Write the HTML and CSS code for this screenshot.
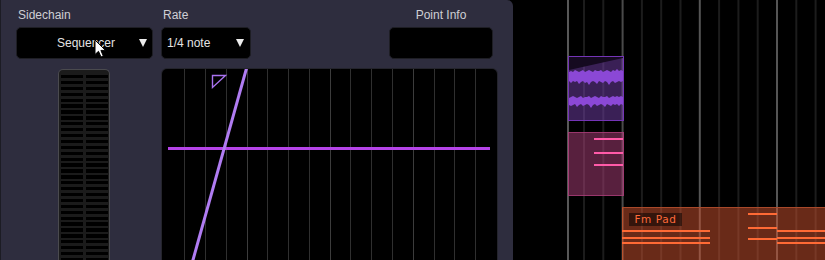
FILE: index.html
```html
<!DOCTYPE html>
<html>
<head>
<meta charset="utf-8">
<link rel="stylesheet" href="styles.css">
</head>
<body>
<div class="app">
  <div class="panel">
    <div class="top">
      <div class="field sidechain">
        <div class="label">Sidechain</div>
        <div class="select sel-side"><span>Sequencer</span><i class="arrow"></i></div>
      </div>
      <div class="field rate">
        <div class="label">Rate</div>
        <div class="select sel-rate"><span>1/4 note</span><i class="arrow"></i></div>
      </div>
      <div class="field info">
        <div class="label center">Point Info</div>
        <div class="box"></div>
      </div>
    </div>
    <div class="bottom">
      <div class="meter"><div class="col"></div><div class="col"></div></div>
      <div class="graph">
        <svg width="335" height="200" viewBox="0 0 335 200">
          <g stroke="#2f2f2f" stroke-width="1">
            <line x1="22.5" y1="0" x2="22.5" y2="200"/>
            <line x1="43.5" y1="0" x2="43.5" y2="200"/>
            <line x1="64.5" y1="0" x2="64.5" y2="200"/>
            <line x1="85.5" y1="0" x2="85.5" y2="200" stroke="#3c3c3c"/>
            <line x1="105.5" y1="0" x2="105.5" y2="200"/>
            <line x1="126.5" y1="0" x2="126.5" y2="200"/>
            <line x1="147.5" y1="0" x2="147.5" y2="200"/>
            <line x1="168.5" y1="0" x2="168.5" y2="200" stroke="#3c3c3c"/>
            <line x1="188.5" y1="0" x2="188.5" y2="200"/>
            <line x1="209.5" y1="0" x2="209.5" y2="200"/>
            <line x1="230.5" y1="0" x2="230.5" y2="200"/>
            <line x1="251.5" y1="0" x2="251.5" y2="200" stroke="#3c3c3c"/>
            <line x1="272.5" y1="0" x2="272.5" y2="200"/>
            <line x1="292.5" y1="0" x2="292.5" y2="200"/>
            <line x1="313.5" y1="0" x2="313.5" y2="200"/>
          </g>
          <line x1="6" y1="79.5" x2="328" y2="79.5" stroke="#b544e8" stroke-width="3"/>
          <line x1="86" y1="-6" x2="29" y2="198" stroke="#b07cf2" stroke-width="3"/>
          <polygon points="50.5,6.5 63.5,6.5 50.5,18.5" fill="none" stroke="#a872ee" stroke-width="1.4"/>
        </svg>
      </div>
    </div>
    <svg class="cursor" width="14" height="20" viewBox="0 0 14 20">
      <path d="M1 1 L1 15.5 L4.5 12.3 L7 18 L9.3 17 L6.9 11.4 L11.5 11.4 Z" fill="#fff" stroke="#000" stroke-width="1" stroke-linejoin="round"/>
    </svg>
  </div>
  <div class="timeline">
    <svg class="grid" width="312" height="260" viewBox="0 0 312 260">
      <g stroke="#1c1c1c" stroke-width="2">
        <line x1="71" y1="0" x2="71" y2="260"/>
        <line x1="90.3" y1="0" x2="90.3" y2="260"/>
        <line x1="109.6" y1="0" x2="109.6" y2="260" stroke="#4a4a4a"/>
        <line x1="128.9" y1="0" x2="128.9" y2="260"/>
        <line x1="148.2" y1="0" x2="148.2" y2="260"/>
        <line x1="167.5" y1="0" x2="167.5" y2="260"/>
        <line x1="186.8" y1="0" x2="186.8" y2="260" stroke="#555"/>
        <line x1="206.1" y1="0" x2="206.1" y2="260"/>
        <line x1="225.4" y1="0" x2="225.4" y2="260"/>
        <line x1="244.7" y1="0" x2="244.7" y2="260"/>
        <line x1="264" y1="0" x2="264" y2="260" stroke="#555"/>
        <line x1="283.3" y1="0" x2="283.3" y2="260"/>
        <line x1="302.6" y1="0" x2="302.6" y2="260"/>
      </g>
      <line x1="55" y1="0" x2="55" y2="260" stroke="#6e6e6e" stroke-width="1.6"/>
    </svg>
    <div class="clip audio">
      <svg class="wave" width="54" height="63" viewBox="0 0 54 63">
        <polygon points="0,0 54,0 54,1 0,13" fill="#150a20"/>
        <polygon fill="#8b48d6" points="0,15 2,14 4,15 6,13 8,14 10,15 12,14 14,13 16,15 18,14 20,13 22,14 24,15 26,13 28,14 30,14 32,13 34,15 36,14 38,13 40,14 42,15 44,13 46,14 48,12 50,14 52,13 54,14 54,24 52,25 50,24 48,25 46,26 44,24 42,25 40,28 38,25 36,24 34,26 32,25 30,24 28,27 26,25 24,24 22,25 20,28 18,25 16,26 14,24 12,25 10,27 8,24 6,25 4,24 2,26 0,24"/>
        <polygon fill="#8b48d6" points="0,41 2,40 4,39 6,40 8,41 10,40 12,39 14,41 16,40 18,40 20,39 22,41 24,40 26,39 28,40 30,41 32,39 34,40 36,40 38,39 40,41 42,40 44,39 46,40 48,39 50,40 52,39 54,40 54,48 52,47 50,49 48,47 46,48 44,47 42,49 40,48 38,47 36,50 34,48 32,47 30,48 28,49 26,47 24,48 22,51 20,48 18,47 16,48 14,49 12,47 10,48 8,50 6,47 4,48 2,49 0,48"/>
      </svg>
    </div>
    <div class="clip midi">
      <i class="note pn" style="top:5px"></i>
      <i class="note pn" style="top:19px"></i>
      <i class="note pn" style="top:31px"></i>
    </div>
    <div class="clip pad">
      <div class="clip-name">Fm Pad</div>
      <i class="note on g1" style="top:22px"></i>
      <i class="note on g1" style="top:29px"></i>
      <i class="note on g1" style="top:34px"></i>
      <i class="note on g2" style="top:5px"></i>
      <i class="note on g2" style="top:19px"></i>
      <i class="note on g2" style="top:30px"></i>
      <i class="note on g3" style="top:22px"></i>
      <i class="note on g3" style="top:29px"></i>
      <i class="note on g3" style="top:34px"></i>
    </div>
  </div>
</div>
</body>
</html>
```

FILE: styles.css
```css
* { box-sizing: border-box; }
html, body {
  margin: 0;
  padding: 0;
  background: #000;
  width: 825px;
  height: 260px;
  overflow: hidden;
  font-family: "Liberation Sans", Arial, sans-serif;
}
.app {
  display: flex;
  width: 825px;
  height: 260px;
}
.panel {
  position: relative;
  width: 513px;
  height: 260px;
  flex: none;
  background: #2e2d3e;
  border-top-right-radius: 6px;
  box-shadow: inset 1px 0 0 #1c1c24;
  padding: 8px 16px 0 16px;
  overflow: hidden;
}
.top {
  display: flex;
}
.field { display: flex; flex-direction: column; }
.sidechain { width: 137px; margin-right: 8px; }
.rate { width: 90px; }
.info { width: 104px; margin-left: auto; margin-right: 4px; }
.label {
  font-size: 12px;
  line-height: 14px;
  height: 14px;
  margin-bottom: 5px;
  color: #cfcfd4;
  padding-left: 2px;
}
.label.center { text-align: center; padding-left: 0; }
.select, .box {
  height: 32px;
  background: #000;
  border: 1px solid #1e1e24;
  border-radius: 5px;
}
.select {
  display: flex;
  align-items: center;
  font-size: 12px;
  color: #e4e4e4;
}
.sel-side { padding: 0 5px 0 40px; }
.sel-rate { padding: 0 6px 0 5px; }
.arrow {
  margin-left: auto;
  width: 0;
  height: 0;
  border-left: 4.5px solid transparent;
  border-right: 4.5px solid transparent;
  border-top: 8px solid #ececec;
}
.bottom {
  display: flex;
  margin-top: 10px;
}
.meter {
  margin-left: 42px;
  width: 52px;
  height: 200px;
  border: 1px solid #4a4a4e;
  border-bottom: none;
  border-radius: 5px 5px 0 0;
  background: #1b1b1b;
  padding: 5px 1px 0 2px;
  display: flex;
  gap: 3px;
}
.col {
  width: 22px;
  height: 100%;
  background: repeating-linear-gradient(to bottom, #000 0, #000 3.3px, transparent 3.3px, transparent 5.9px);
}
.graph {
  margin-left: 52px;
  width: 335px;
  height: 200px;
  background: #000;
  border-radius: 5px;
  box-shadow: 0 0 0 1px #24242c;
  overflow: hidden;
}
.graph svg { display: block; }
.cursor {
  position: absolute;
  left: 94px;
  top: 39px;
}
.timeline {
  position: relative;
  flex: 1;
  height: 260px;
  background: #000;
  overflow: hidden;
}
.grid { position: absolute; left: 0; top: 0; }
.clip {
  position: absolute;
}
.audio {
  left: 55px;
  top: 56px;
  width: 56px;
  height: 65px;
  background: rgba(116, 64, 172, 0.5);
  border: 1px solid #7434b6;
}
.wave { position: absolute; left: 0; top: 0; }
.midi {
  left: 55px;
  top: 132px;
  width: 56px;
  height: 64px;
  background: rgba(184, 66, 130, 0.48);
  border: 1px solid rgba(170, 60, 120, 0.8);
}
.pad {
  left: 109px;
  top: 207px;
  width: 210px;
  height: 60px;
  background: rgba(210, 84, 48, 0.5);
  border-top: 1px solid #a8492a;
  border-left: 1px solid #b8532e;
}
.note {
  position: absolute;
  height: 2px;
  display: block;
}
.pn { left: 25px; width: 29px; background: #ff5aa8; }
.on { background: #ff6a35; }
.g1 { left: -1px; width: 88px; }
.g2 { left: 125px; width: 29px; }
.g3 { left: 154px; width: 60px; }
.clip-name {
  position: absolute;
  left: 6px;
  top: 5px;
  width: 53px;
  height: 13px;
  background: rgba(0, 0, 0, 0.5);
  color: #ff6a3a;
  font-family: "DejaVu Sans", sans-serif;
  font-size: 10.5px;
  line-height: 13px;
  letter-spacing: 0.6px;
  text-align: center;
}
```
